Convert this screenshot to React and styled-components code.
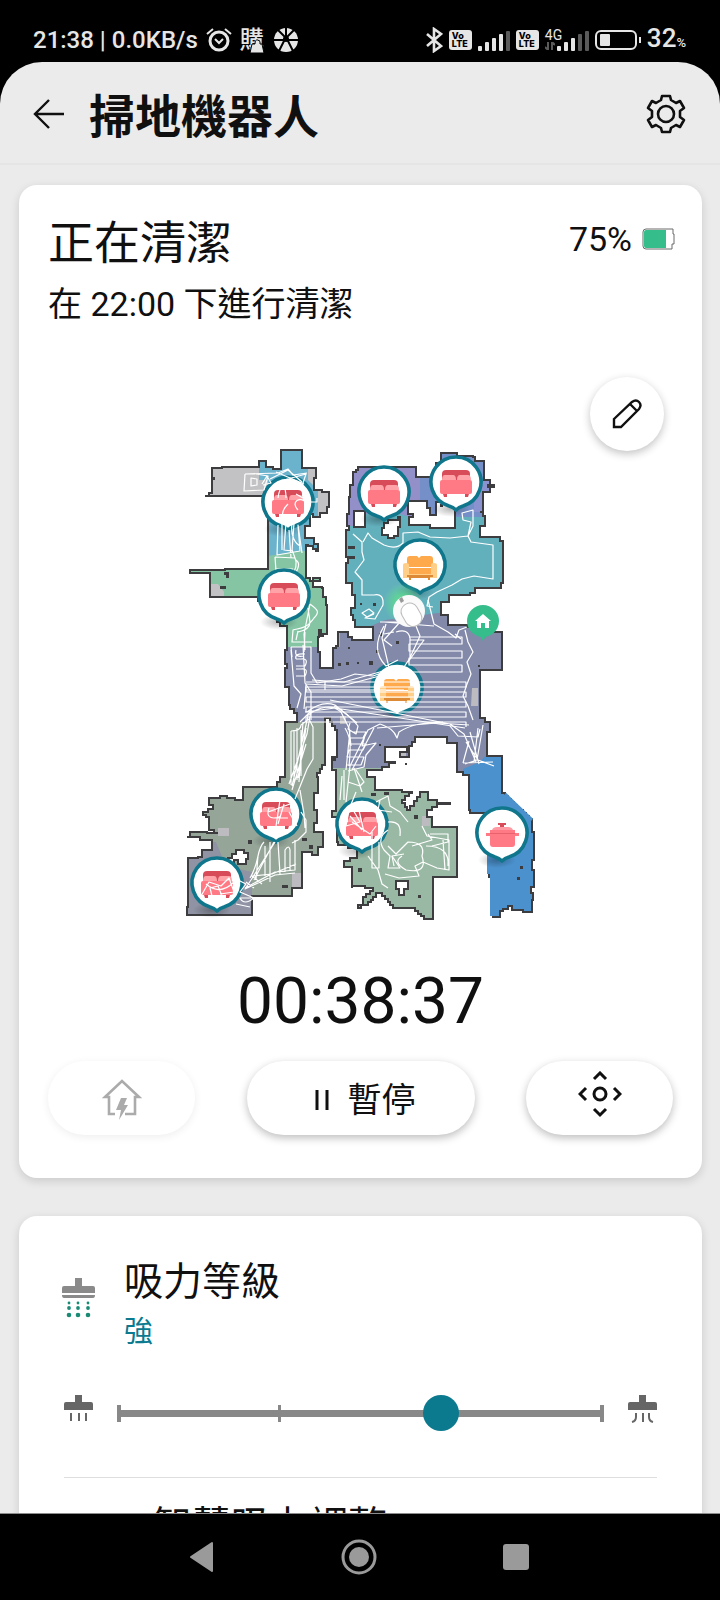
import { useState } from "react";
import styled, { createGlobalStyle } from "styled-components";

const GlobalStyle = createGlobalStyle`
  * {
    box-sizing: border-box;
  }

  body {
    margin: 0;
    background: #000;
    color: #101010;
    font-family: Roboto, "Noto Sans CJK TC", sans-serif;
  }

  button {
    border: 0;
    padding: 0;
    background: none;
    color: inherit;
    font: inherit;
    cursor: pointer;
  }

  h1, h2, p {
    margin: 0;
    font-weight: 400;
  }

  svg {
    display: block;
    flex-shrink: 0;
  }
`;

const Screen = styled.div`
  display: flex;
  flex-direction: column;
  height: 100vh;
`;

/* status bar */

const StatusBar = styled.div`
  display: flex;
  align-items: center;
  justify-content: space-between;
  height: 62px;
  padding: 18px 34px 0 33px;
  color: #e6e6e6;
  font-size: 24px;
  font-weight: 500;
  line-height: 28px;
`;

const StatusGroup = styled.div`
  display: flex;
  align-items: center;
  gap: ${(props) => props.$gap}px;
`;

const ShopBadge = styled.span`
  position: relative;
  font-size: 24px;
  line-height: 28px;

  svg {
    position: absolute;
    right: 0;
    bottom: 1px;
  }
`;

const VoLte = styled.span`
  width: 23px;
  height: 20px;
  padding: 2px 0 0 3px;
  border-radius: 3px;
  background: #e6e6e6;
  color: #000;
  font: 800 9px/8px Inter, sans-serif;
`;

const Percent = styled.span`
  display: flex;
  align-items: baseline;
  font-size: 26px;

  small {
    font-size: 13px;
  }
`;

/* app shell */

const Shell = styled.div`
  flex: 1;
  min-height: 0;
  display: flex;
  flex-direction: column;
  border-radius: 42px 42px 0 0;
  background: #ebebeb;
  overflow: hidden;
`;

const Header = styled.header`
  display: flex;
  align-items: center;
  gap: 24px;
  padding: 16px 34px 13px 33px;
  border-bottom: 2px solid #e5e5e5;

  h1 {
    flex: 1;
    padding-top: 6px;
    font-size: 46px;
    font-weight: 700;
    line-height: 66px;
  }
`;

const Content = styled.main`
  flex: 1;
  min-height: 0;
  display: flex;
  flex-direction: column;
  gap: 38px;
  padding: 20px 18px 0 19px;
  overflow: hidden;
`;

const Card = styled.section`
  flex-shrink: 0;
  border-radius: 18px;
  background: #fff;
  box-shadow: 0 3px 10px rgba(0, 0, 0, 0.14);
`;

const StatusCard = styled(Card)`
  padding: 30px 29px 43px;
`;

const CardTop = styled.div`
  display: flex;
  justify-content: space-between;

  h2 {
    font-size: 46px;
    line-height: 56px;
  }

  p {
    margin-top: 11px;
    font-size: 34px;
    line-height: 44px;
  }
`;

const Battery = styled.div`
  display: flex;
  align-items: center;
  gap: 10px;
  height: 48px;
  margin-right: -2px;
  font-size: 34px;
`;

const MapArea = styled.div`
  position: relative;
  display: flex;
  justify-content: center;
  margin-top: 51px;
  padding: 63px 1px 0 0;
`;

const EditButton = styled.button`
  position: absolute;
  top: 0;
  right: 9px;
  display: grid;
  place-items: center;
  width: 74px;
  height: 74px;
  border-radius: 50%;
  background: #fff;
  box-shadow: 0 3px 8px rgba(0, 0, 0, 0.24);
`;

const Timer = styled.p`
  padding-top: 26px;
  font-size: 64px;
  line-height: 72px;
  text-align: center;
`;

const Actions = styled.div`
  display: flex;
  justify-content: space-between;
  margin-top: 23px;
`;

const PillButton = styled.button`
  display: flex;
  align-items: center;
  justify-content: center;
  gap: 18px;
  width: ${(props) => (props.$wide ? 228 : 147)}px;
  height: 74px;
  padding: ${(props) => (props.$wide ? "3px 0 0 8px" : "3px 0 0")};
  border-radius: 37px;
  background: #fff;
  font-size: 34px;
  line-height: 44px;
  box-shadow: 0 3px 8px rgba(0, 0, 0, 0.26);

  &:disabled {
    box-shadow: 0 2px 8px rgba(0, 0, 0, 0.07);
    cursor: default;
  }
`;

/* suction card */

const SuctionCard = styled(Card)`
  padding: 38px 45px 0;
`;

const SettingHead = styled.div`
  display: flex;
  align-items: flex-start;
  gap: 29px;
  margin-left: -2px;

  svg {
    margin-top: 24px;
  }

  label {
    display: block;
    font-size: 39px;
    line-height: 56px;
  }

  output {
    display: block;
    color: #0b7a8f;
    font-size: 29px;
    line-height: 44px;
  }
`;

const SliderRow = styled.div`
  display: flex;
  align-items: center;
  gap: 8px;
  margin-top: 41px;
  padding-bottom: 46px;
  border-bottom: 1px solid #dedede;
`;

const Slider = styled.input`
  flex: 1;
  min-width: 0;
  height: 36px;
  margin: 0;
  appearance: none;
  background-color: transparent;
  background-image: linear-gradient(#888, #888), linear-gradient(#888, #888),
    linear-gradient(#888, #888), linear-gradient(#888, #888);
  background-position: center, 16px center,
    calc(17px + (100% - 36px) / 3) center, calc(100% - 16px) center;
  background-size: calc(100% - 32px) 7px, 4px 17px, 3px 17px, 4px 17px;
  background-repeat: no-repeat;

  &::-webkit-slider-thumb {
    appearance: none;
    width: 36px;
    height: 36px;
    border-radius: 50%;
    background: #0b7a8f;
  }
`;

const NextSetting = styled.h2`
  padding: 20px 0 40px 89px;
  font-size: 39px;
  line-height: 56px;
`;

/* android navigation */

const NavBar = styled.nav`
  display: flex;
  justify-content: center;
  height: 87px;
  border-top: 1px solid #8c8c8c;
  padding-right: 2px;
`;

const NavButton = styled.button`
  display: grid;
  place-items: center;
  width: 157px;
`;

/* floor map data, in map units */

const OUTLINE = [
  [205, 496], [209, 493], [212, 490], [212, 468], [222, 467], [259, 467],
  [259, 461], [266, 461], [266, 467], [273, 469], [281, 468], [281, 450],
  [302, 450], [302, 468], [316, 468], [316, 478], [314, 480], [314, 490],
  [322, 490], [322, 492], [329, 492], [329, 507], [327, 507], [327, 513],
  [320, 513], [320, 517], [313, 517], [313, 514], [310, 526], [305, 526],
  [305, 538], [314, 538], [314, 544], [318, 549], [318, 551], [313, 546],
  [308, 545], [306, 549], [306, 578], [310, 581], [320, 578], [313, 580],
  [313, 587], [322, 588], [323, 597], [326, 605], [327, 634], [323, 636],
  [321, 630], [319, 637], [318, 652], [320, 658], [320, 668], [333, 668],
  [333, 648], [338, 643], [338, 632], [348, 632], [348, 637], [352, 640],
  [373, 640], [373, 627], [355, 626], [355, 620], [353, 620], [353, 615],
  [351, 615], [351, 608], [355, 606], [355, 595], [352, 590], [352, 583],
  [346, 580], [346, 563], [348, 557], [346, 530], [349, 526], [347, 520],
  [347, 514], [349, 497], [350, 485], [353, 484], [353, 472], [358, 467],
  [416, 467], [416, 477], [430, 477], [436, 470], [436, 463], [441, 463],
  [441, 453], [457, 453], [457, 456], [473, 457], [475, 461], [484, 461],
  [484, 480], [490, 480], [490, 485], [494, 485], [494, 487], [490, 487],
  [490, 492], [483, 492], [483, 512], [480, 512], [485, 520], [485, 526],
  [480, 528], [480, 537], [498, 537], [500, 541], [503, 541], [503, 583],
  [501, 583], [501, 588], [475, 589], [475, 593], [470, 595], [450, 595],
  [449, 602], [441, 603], [441, 615], [448, 617], [448, 625], [467, 627],
  [477, 632], [502, 632], [502, 670], [480, 672], [480, 718], [490, 725],
  [490, 732], [487, 740], [487, 756], [502, 756], [502, 793], [532, 822],
  [532, 832], [534, 860], [532, 870], [534, 887], [531, 893], [533, 900],
  [532, 912], [523, 912], [523, 910], [512, 910], [512, 906], [503, 911],
  [500, 917], [493, 917], [493, 877], [489, 873], [489, 813], [470, 810],
  [469, 775], [457, 769], [457, 743], [447, 743], [447, 737], [417, 737],
  [412, 746], [409, 757], [400, 756], [400, 752], [407, 752], [407, 747],
  [385, 747], [385, 762], [395, 763], [382, 770], [367, 772], [367, 777],
  [375, 779], [375, 790], [402, 792], [412, 793], [402, 803], [407, 810],
  [420, 792], [424, 792], [428, 800], [437, 803], [450, 804], [437, 807],
  [427, 812], [427, 817], [432, 820], [432, 827], [457, 827], [457, 877],
  [433, 877], [433, 919], [427, 919], [415, 908], [393, 905], [382, 893],
  [376, 897], [368, 905], [358, 908], [363, 902], [363, 897], [373, 888],
  [365, 886], [352, 888], [352, 867], [344, 867], [344, 861], [350, 858],
  [357, 858], [357, 848], [338, 842], [337, 817], [332, 815], [332, 811],
  [336, 808], [336, 770], [332, 765], [332, 757], [337, 757], [337, 730],
  [332, 722], [330, 718], [325, 720], [325, 765], [317, 777], [318, 793],
  [314, 810], [317, 823], [314, 832], [323, 832], [323, 847], [318, 850],
  [318, 855], [312, 852], [305, 852], [302, 857], [302, 888], [292, 888],
  [292, 896], [252, 897], [252, 915], [190, 915], [187, 907], [188, 858],
  [198, 857], [202, 850], [212, 850], [212, 840], [200, 837], [187, 837],
  [190, 832], [207, 833], [218, 833], [209, 827], [209, 817], [203, 812],
  [213, 805], [209, 798], [220, 796], [227, 798], [235, 800], [243, 797],
  [243, 787], [273, 787], [280, 777], [285, 773], [285, 722], [297, 722],
  [297, 713], [290, 705], [289, 687], [285, 680], [285, 668], [287, 664],
  [285, 650], [287, 647], [287, 626], [280, 622], [258, 597], [210, 597],
  [210, 573], [190, 571], [190, 570], [225, 569], [268, 569], [268, 496],
];

const ROOMS = [
  { color: "#8289a9", points: "278,600 520,600 520,780 278,780" },
  { color: "#c2c2c4", points: "180,440 340,440 340,580 180,580" },
  { color: "#6bb2cc", points: "259,440 308,440 308,480 318,490 318,556 268,556 268,480 259,480" },
  { color: "#85c5a4", points: "180,552 268,556 300,551 340,551 340,647 280,647 180,600" },
  { color: "#c2c2c4", points: "208,584 218,584 224,592 224,600 208,600" },
  { color: "#938fc8", points: "345,445 424,445 424,530 345,530" },
  { color: "#7590c8", points: "420,445 500,445 500,530 420,530" },
  { color: "#8a92cf", points: "474,480 500,480 500,512 474,512" },
  { color: "#63b0bd", points: "340,526 366,526 366,514 400,514 440,526 456,517 510,517 510,605 438,613 385,620 356,632 340,632" },
  { color: "#95a699", points: "180,722 326,722 326,925 180,925" },
  { color: "#8f93a3", points: "180,842 216,842 226,866 252,872 252,925 180,925" },
  { color: "#9ab9a4", points: "327,768 395,768 462,790 462,925 327,925" },
  { color: "#4b91cd", points: "463,769 480,762 487,754 540,754 540,925 463,925" },
];

const HOLES = [
  "M354 511h11v16h-11z",
  "M382 528h2v-5h4v-3h10v-3h2v10h-2v9h-4v2h-6v-3h-6z",
  "M408 501h19v7h3v7h6v-13h19v26h-25v-3h-21v-8h4v-3h-5z",
  "M228 858h4v-4h4v-4h8v3h4v6h-2v5h-8v-4h-4v3h-6z",
  "M396 881h12v8h-4v6h-5v-6h-3z",
];

const OBSTACLES = [
  [212, 477, 3], [224, 572, 5], [226, 575, 3], [220, 586, 6], [348, 546, 7],
  [348, 556, 7], [360, 603, 2], [373, 603, 3], [348, 647, 2], [379, 633, 3],
  [396, 641, 3], [338, 663, 3], [346, 662, 3], [357, 662, 2], [369, 661, 4],
  [390, 662, 3], [478, 665, 2], [248, 840, 4], [358, 868, 4], [414, 815, 4],
  [418, 895, 3], [517, 877, 3], [520, 866, 3], [302, 838, 5], [309, 845, 4],
  [282, 885, 6], [331, 758, 5], [405, 763, 2], [379, 744, 2], [487, 484, 4],
  [440, 504, 3], [371, 793, 5], [384, 792, 5], [376, 650, 3],
];

// each trail is one polyline of the robot's route
const TRAILS = [
  "M245 474l-1 17 20-1 4-14-12-2M251 478l6 1v6l-6 1zM262 484l5-8 4 7-8 2M245 474l33-1 10-4 5 6 14-2M270 479l18-9 14 12M276 472l28 12M284 480l22-6-4 12",
  "M278 498c2-14 8-14 8 0M288 504c-6 6-8 12-2 18M296 494l14 8h7v-4M298 510c-8-8 2-14 8-8M282 524v26M286 522l-2 28 8 1 2-28M278 525l-1 30 23-4-2-26 4 28M292 524c-2 12 4 20 8 22M289 530l2 28",
  "M275 557l1 14M275 557l20 1M292 550c4 10 6 14 2 22M296 560c6 4 0 12-3 18M275 569h18M310 604c8 6 10 8 4 14-8 12-16 10-21 12l-1 12h20M298 632c10-2 12-6 12-10l-2-14M296 640l2-9M305 632l-1 20M310 604l-6 30 1 16",
  "M291 647h20v26l6 10 24-4 14-5 18 2 22-8M291 647l1 10M296 650q-2 8 8 6M296 659q-2-6 9-5M296 666h9q4-8-4-7h-5M296 676h9q4-8-4-7h-5M303 645l2 38 6 9v28M291 650l3 36 7 8-4 14",
  "M312 680l32 2 50-14M325 681v9M306 684l36 2 60-16M306 690h98M306 685l-2 24M307 712c10-8 20-10 28-7l22 18M307 716c12-10 26-12 34-4l8 16 2 18M305 712l30-4 130 20",
  "M334 706c12 6 18 12 24 20l-2 8-8-5 2-6M350 730l-4 40M345 728c6 10 6 18 4 38M352 732h14l-3 6h-13l-1 6h17l-3 6h-14l-2 7h17l-3 8h-14M366 732l-4 14 14-3-10 12-2 12-16 4M350 766l18-36 12-6M352 770l22-42",
  "M380 724c10 4 14 6 17 14l2-6c12-8 28-10 44-10M377 728l60-5 32 2M330 700l120 24 14 10 12 28M450 726l8 10 20 1 2-8M463 763l30-1M463 763l6-22M465 764l12-4 6-35M478 728l-4 34M466 742l12 18 16 6M470 732l9 32",
  "M465 630l3 12 5 10-6 10 4 12-4 10-4 12 5 10 5 14M428 600l6 24 14 8 8 6 3-8 8-3M455 634l6 5M353 534l9 8v10l2 8-9 12 7 8v15h12q10-2 9 10l-8 14-10-1 9-4M362 613l7-4 5 4-7 4z",
  "M363 542l5-9 4 5 12 7q12 5 19-2v-10l15-1 12 5 20 1 18-2 5-10v-16l-11 3 1 7 8 2-3 14 3 6 22 3v34l-19-3-12 3-10 6-15 7-8 5-2 9 6 1",
  "M380 622h20l-16 18 8 6M384 634l10-2M386 624l-4 14 8 34M396 632q12-4 14 6v20l-8 12M416 626l4 10-12 26M410 640h14l-16 22M384 626q-14 24 2 40l12-6M384 622l50 4",
  "M291 731v54M294 730v52M297 728v52M301 730v46M303 722l-4 60M306 728l-8 50M291 731q10 0 10-6l8-6 4 8v32l-6 10-12 30M311 710l-4 24-18 50M300 722l10-10M308 716l-16 70M306 744l-14 46",
  "M269 808c-4 10 4 12 12 8M268 812l22-8M284 804l-6 20M280 800l-4 26M289 812l8 14M272 818h16M301 812l5 8v12l-8 8-6 3M300 790l4 24 1 14",
  "M274 842l-20 38M264 842c-8 8-4 20-14 36M265 846v30M270 842v40M258 856l-2 24M278 842l2 32M285 872v-22q4-6 5 0v20M295 840v30l-20 2-30 16M296 864l-24 10-20 2 10 8M275 842l-24 38-6 9 30-14 20-2M246 882l8 6",
  "M201 896l8-14 12 4 8-8 5 14-14 2M212 896l-2-8 8-2 4 10M206 884q14 12 28-2M234 878l12 6-6 8 14 6q-10 8-14 0h16M236 904l14 3",
  "M344 770v30M350 766l-4 36M354 768l8 24M348 782l12 4 4-4-8-12M342 776l-2 24M356 792l-12 30M346 812l20-6M350 816l12 14M358 806l6 26M350 806l-4 20 14-4-8-14M352 822l18 12 6-8",
  "M376 802l12-6 2 10 10 6 8 10M380 800l-2 10 14 2M372 832v36h7v-26M368 856l10 14 4 14 6 4M388 830q-12 8-4 20l6 6-2 12h12l-8-12M388 822q14-2 12 14",
  "M402 856q-10 6 4 14 22 4 16-14 4-14-14-14l-12 12-8-8M422 826l5 10 22 4v30l-12-2-14-6-8 4 4 10-20 2-14-4M443 840l2 30M430 834h18v8l-16 4M412 846l20-6-4-6M394 866l-2-10 12-2M426 846q24 0 22 20",
];

const PINS = [
  { x: 288, y: 502, kind: "bed" },
  { x: 384, y: 492, kind: "bed" },
  { x: 456, y: 482, kind: "bed" },
  { x: 284, y: 595, kind: "bed", above: true },
  { x: 420, y: 565, kind: "sofa", above: true },
  { x: 397, y: 688, kind: "sofa" },
  { x: 276, y: 814, kind: "bed" },
  { x: 217, y: 883, kind: "bed" },
  { x: 362, y: 824, kind: "bed" },
  { x: 502, y: 833, kind: "pot" },
];

// turn sloped walls into small right-angled steps
const stepPath = (points) => {
  let d = `M${points[0]}`;
  for (let i = 1; i < points.length; i++) {
    const [x0, y0] = points[i - 1];
    const [x1, y1] = points[i];
    const dx = x1 - x0;
    const dy = y1 - y0;
    const size = Math.min(Math.abs(dx), Math.abs(dy));
    const steps = Math.max(1, Math.round(size / 3));
    for (let s = 1; s <= steps; s++) {
      d += `H${x0 + Math.round((dx * s) / steps)}V${y0 + Math.round((dy * s) / steps)}`;
    }
  }
  return `${d}Z`;
};

// back and forth lanes of a finished area
const lanes = (left, right, top, bottom, gap) => {
  let d = `M${left} ${top}`;
  let atLeft = true;
  for (let y = top; y <= bottom; y += gap) {
    d += atLeft ? `H${right}v${gap}` : `H${left}v${gap}`;
    atLeft = !atLeft;
  }
  return d;
};

const walls = stepPath(OUTLINE);

const BedGlyph = () => (
  <g>
    <path d="M-14-1v-7q0-4 4-4h20q4 0 4 4v7z" fill="#d84c5a" />
    <rect x="-16" y="-2" width="32" height="14" rx="2" fill="#ff7a85" />
    <path d="M-14-2q0-5 3-5h8q3 0 3 5zM1-2q0-5 3-5h8q3 0 3 5z" fill="#ffa3a9" />
    <path d="M-13 12h4v3h-3zM9 12h4l-1 3h-3z" fill="#d84c5a" />
  </g>
);

const SofaGlyph = () => (
  <g>
    <path d="M-13 2v-8q0-3 3-3h7l2 2 2-2h9q3 0 3 3v8z" fill="#ffa94d" />
    <path d="M-17 0q0-2 3-2t3 2v3h22V0q0-2 3-2t3 2v13h-34z" fill="#ffcf88" />
    <path d="M-11 3h22v6h-22z" fill="#ffa94d" />
    <path d="M-13 10h26v2h-3v3h-2v-2H-9v2h-2v-3h-2z" fill="#dc8a35" />
  </g>
);

const PotGlyph = () => (
  <g>
    <path d="M-4-10h8v2h-2v2h-4v-2h-2z" fill="#d84c5a" />
    <path d="M-10-3q1-3 5-3H6q4 0 5 3z" fill="#ff9aa2" />
    <path d="M-12-3h25v14q0 3-3 3H-9q-3 0-3-3z" fill="#ff7a85" />
    <path d="M-16 0h33v3h-33z" fill="#ff7a85" />
    <path d="M-12 0h25v1h-25z" fill="#e8616d" />
  </g>
);

const GLYPHS = { bed: BedGlyph, sofa: SofaGlyph, pot: PotGlyph };

const Pin = ({ x, y, kind }) => {
  const Glyph = GLYPHS[kind];
  return (
    <g transform={`translate(${x} ${y})`}>
      <ellipse cx="-5" cy="27" rx="19" ry="8" fill="url(#pinShadow)" />
      <path
        d="M-7 24A25 25 0 1 1 7 24Q3 25 0 28Q-3 25-7 24Z"
        fill="#fff"
        stroke="#0f768b"
        strokeWidth="3.6"
        strokeLinejoin="round"
      />
      <Glyph />
    </g>
  );
};

const FloorMap = () => (
  <svg width="360" height="500" viewBox="180 440 360 500" role="img" aria-label="清潔地圖">
    <defs>
      <clipPath id="floor">
        <path d={walls} />
      </clipPath>
      <radialGradient id="pinShadow">
        <stop offset="0" stopColor="#000" stopOpacity="0.28" />
        <stop offset="1" stopColor="#000" stopOpacity="0" />
      </radialGradient>
      <radialGradient id="glow">
        <stop offset="0.4" stopColor="#5fe08a" stopOpacity="0.7" />
        <stop offset="1" stopColor="#5fe08a" stopOpacity="0" />
      </radialGradient>
    </defs>

    <g clipPath="url(#floor)">
      {ROOMS.map((room) => (
        <polygon key={room.points} points={room.points} fill={room.color} />
      ))}
      <path d="M472 688h6v18h-7zM400 748h6v8h-6zM340 716h6v8h-6zM218 828h11v8h-11zM292 873h11v14h-11zM437 803h12v5h-12zM422 816h8v10h-8z" fill="#bcbcc0" />
    </g>
    <path d={walls} fill="none" stroke="#3d3d40" strokeWidth="2" />
    <path d="M504 795L531 821" stroke="#4b91cd" strokeWidth="6" />
    <path d="M489 815v57h3v44" stroke="#4b91cd" strokeWidth="4" fill="none" />
    {HOLES.map((d) => (
      <path key={d} d={d} fill="#fff" stroke="#3d3d40" strokeWidth="2" />
    ))}
    {OBSTACLES.map(([x, y, size]) => (
      <rect key={`${x}-${y}`} x={x} y={y} width={size} height={size > 4 ? 3 : size} fill="#3d3d40" />
    ))}

    {PINS.filter((pin) => !pin.above).map((pin) => (
      <Pin key={`${pin.x}-${pin.y}`} {...pin} />
    ))}

    <g fill="none" stroke="#fff" strokeWidth="1.2" strokeLinejoin="round">
      <path d={lanes(409, 462, 637, 674, 7)} />
      <path d={lanes(306, 466, 682, 722, 5)} />
      {TRAILS.map((d) => (
        <path key={d} d={d} />
      ))}
    </g>

    {PINS.filter((pin) => pin.above).map((pin) => (
      <Pin key={`${pin.x}-${pin.y}`} {...pin} />
    ))}

    <circle cx="403" cy="603" r="20" fill="url(#glow)" />
    <circle cx="409" cy="611" r="16" fill="#fafafa" />
    <path d="M399 599l3-2 2 4-3 2z" fill="#999" />
    <rect x="403" y="603" width="17" height="24" rx="8" fill="#fff" stroke="#bbb" transform="rotate(-30 411 615)" />

    <path d="M478 633h10l-5 8z" fill="#35bd8c" />
    <circle cx="483" cy="621" r="16" fill="#35bd8c" />
    <path d="M483 614l8 7h-2v7h-4v-5h-4v5h-4v-7h-2z" fill="#fff" />
  </svg>
);

/* icons */

const AlarmIcon = () => (
  <svg width="26" height="26" viewBox="0 0 26 26" fill="none" stroke="#e6e6e6" strokeWidth="3">
    <circle cx="13" cy="14" r="9" />
    <path d="M9 12l4 4 4-4" strokeWidth="2" />
    <path d="M1 7l6-5M25 7l-6-5" strokeWidth="2" />
  </svg>
);

const BagIcon = () => (
  <svg width="14" height="14" viewBox="0 0 14 14">
    <path d="M0 14l2-9h3q0-5 3-4t2 4h2l2 9z" fill="#e6e6e6" stroke="#000" />
  </svg>
);

const ShutterIcon = () => (
  <svg width="24" height="24" viewBox="0 0 24 24">
    <circle cx="12" cy="12" r="12" fill="#e6e6e6" />
    <path d="M12 0v11M0 12h24M12 9L5 23M12 9l7 14M12 10L4 2M12 10l8-8" stroke="#000" strokeWidth="2" />
    <circle cx="12" cy="11" r="3" fill="#000" />
  </svg>
);

const BluetoothIcon = () => (
  <svg width="17" height="26" viewBox="0 0 17 26" fill="none" stroke="#e6e6e6" strokeWidth="2.6">
    <path d="M1 7l14 12-7 5V2l7 5L1 19" />
  </svg>
);

const Signal = ({ active }) => (
  <svg width="32" height="21" viewBox="0 0 32 21">
    {[5, 9, 13, 17, 20].map((h, i) => (
      <rect key={h} x={i * 7} y={21 - h} width="4" height={h} rx="1" fill={i < active ? "#e6e6e6" : "#5a5a5a"} />
    ))}
  </svg>
);

const MobileData = styled.span`
  display: flex;
  flex-direction: column;
  align-items: flex-start;
  width: 12px;
  height: 24px;
  margin-right: -6px;
  font-size: 14px;
  font-weight: 400;
  line-height: 14px;
`;

const DataArrows = () => (
  <svg width="10" height="8" viewBox="0 0 10 8" stroke="#5a5a5a" strokeWidth="2" fill="none">
    <path d="M3 0v8L0 5M7 8V0l3 3" />
  </svg>
);

const PhoneBattery = () => (
  <svg width="46" height="20" viewBox="0 0 46 20">
    <rect x="1" y="1" width="40" height="18" rx="5" fill="none" stroke="#e6e6e6" strokeWidth="2" />
    <rect x="5" y="4" width="10" height="12" rx="1" fill="#e6e6e6" />
    <rect x="44" y="7" width="2" height="6" fill="#e6e6e6" />
  </svg>
);

const BackIcon = () => (
  <svg width="32" height="30" viewBox="0 0 32 30" fill="none" stroke="#101010" strokeWidth="2.4">
    <path d="M31 15H2M16 1L2 15l14 14" />
  </svg>
);

const GearIcon = () => (
  <svg width="40" height="40" viewBox="-20 -20 40 40" fill="none" stroke="#101010" strokeWidth="2.6" strokeLinejoin="round">
    <path d="M-4-18H4L5-14 10-11 14-13 18-6 14-3V3L18 6 14 13 10 11 5 14 4 18H-4L-5 14-10 11-14 13-18 6-14 3V-3L-18-6-14-13-10-11-5-14Z" />
    <circle r="8" />
  </svg>
);

const RobotBattery = () => (
  <svg width="33" height="22" viewBox="0 0 33 22">
    <path d="M4 1h27v5h1v10h-2v5H4q-3 0-3-3V4q0-3 3-3z" fill="#fff" stroke="#6a6a6a" />
    <path d="M4 2h20v18H4q-2 0-2-2V4q0-2 2-2z" fill="#35bd8c" />
  </svg>
);

const PencilIcon = () => (
  <svg width="30" height="30" viewBox="0 0 30 30" fill="none" stroke="#101010" strokeWidth="2.4">
    <path d="M2 20L20 3q4-3 7 0t0 7L9 28H2zM18 5l7 7" />
  </svg>
);

const HomeChargeIcon = () => (
  <svg width="40" height="42" viewBox="0 0 40 42" fill="none" stroke="#ababab" strokeWidth="2.6">
    <path d="M13 35H7V18H3L20 2l17 16h-4v17H23" />
    <path d="M19 19h6l-3 7h4l-9 15 2-10h-5z" fill="#ababab" stroke="none" />
  </svg>
);

const PauseIcon = () => (
  <svg width="16" height="22" viewBox="0 0 16 22" fill="none" stroke="#101010" strokeWidth="3">
    <path d="M3 1v20M13 1v20" />
  </svg>
);

const RemoteIcon = () => (
  <svg width="44" height="58" viewBox="0 0 44 58" fill="none" stroke="#101010" strokeWidth="3">
    <circle cx="22" cy="23" r="6" />
    <path d="M16 8l6-6 6 6M16 38l6 6 6-6M8 17l-6 6 6 6M36 17l6 6-6 6" />
  </svg>
);

const SuctionIcon = () => (
  <svg width="33" height="40" viewBox="0 0 33 40">
    <path d="M13 0h7v8h11q2 0 2 2v5H0v-5q0-2 2-2h11zM0 17h33q0 3-2 3H2q-2 0-2-3z" fill="#8a8a8a" />
    {[7, 16, 26].map((x) => (
      <g key={x} fill="#1a8a74">
        <circle cx={x} cy="25" r="1.4" />
        <circle cx={x} cy="30" r="1.9" />
        <circle cx={x} cy="37" r="2.3" />
      </g>
    ))}
  </svg>
);

const NozzleIcon = ({ strong }) => (
  <svg width="29" height="36" viewBox="0 0 29 36">
    <path d="M11 0h7v7h9q2 0 2 2v6H0V9q0-2 2-2h9z" fill="#666" />
    <path
      d={strong ? "M8 18v4q0 4-4 5M15 18v9M21 18v4q0 4 4 5" : "M7 18v8M15 18v8M22 18v8"}
      fill="none"
      stroke="#666"
      strokeWidth="2"
    />
  </svg>
);

const LEVELS = ["靜音", "標準", "強", "超強"];

const App = () => {
  const [level, setLevel] = useState(2);

  return (
    <Screen>
      <GlobalStyle />
      <StatusBar>
        <StatusGroup $gap={8}>
          <span>21:38 | 0.0KB/s</span>
          <AlarmIcon />
          <StatusGroup $gap={10}>
            <ShopBadge>
              購
              <BagIcon />
            </ShopBadge>
            <ShutterIcon />
          </StatusGroup>
        </StatusGroup>
        <StatusGroup $gap={6}>
          <BluetoothIcon />
          <VoLte>Vo<br />LTE</VoLte>
          <Signal active={4} />
          <VoLte>Vo<br />LTE</VoLte>
          <MobileData>
            4G
            <DataArrows />
          </MobileData>
          <Signal active={3} />
          <PhoneBattery />
          <Percent>32<small>%</small></Percent>
        </StatusGroup>
      </StatusBar>

      <Shell>
        <Header>
          <button aria-label="返回"><BackIcon /></button>
          <h1>掃地機器人</h1>
          <button aria-label="設定"><GearIcon /></button>
        </Header>

        <Content>
          <StatusCard>
            <CardTop>
              <div>
                <h2>正在清潔</h2>
                <p>在 22:00 下進行清潔</p>
              </div>
              <Battery>
                75%
                <RobotBattery />
              </Battery>
            </CardTop>

            <MapArea>
              <FloorMap />
              <EditButton aria-label="編輯地圖"><PencilIcon /></EditButton>
            </MapArea>

            <Timer>00:38:37</Timer>

            <Actions>
              <PillButton disabled aria-label="返回充電座"><HomeChargeIcon /></PillButton>
              <PillButton $wide>
                <PauseIcon />
                暫停
              </PillButton>
              <PillButton aria-label="遙控"><RemoteIcon /></PillButton>
            </Actions>
          </StatusCard>

          <SuctionCard>
            <SettingHead>
              <SuctionIcon />
              <div>
                <label htmlFor="suction">吸力等級</label>
                <output htmlFor="suction">{LEVELS[level]}</output>
              </div>
            </SettingHead>
            <SliderRow>
              <NozzleIcon />
              <Slider
                id="suction"
                type="range"
                min="0"
                max="3"
                value={level}
                onChange={(e) => setLevel(Number(e.target.value))}
              />
              <NozzleIcon strong />
            </SliderRow>
            <NextSetting>智慧吸力調整</NextSetting>
          </SuctionCard>
        </Content>
      </Shell>

      <NavBar>
        <NavButton aria-label="上一頁">
          <svg width="26" height="32" viewBox="0 0 26 32">
            <path d="M23 2v28L2 16z" fill="#9a9a9a" stroke="#9a9a9a" strokeWidth="2" strokeLinejoin="round" />
          </svg>
        </NavButton>
        <NavButton aria-label="主畫面">
          <svg width="36" height="36" viewBox="0 0 36 36">
            <circle cx="18" cy="18" r="16" fill="none" stroke="#9a9a9a" strokeWidth="3" />
            <circle cx="18" cy="18" r="10" fill="#9a9a9a" />
          </svg>
        </NavButton>
        <NavButton aria-label="最近使用">
          <svg width="26" height="26" viewBox="0 0 26 26">
            <rect width="26" height="26" rx="3" fill="#9a9a9a" />
          </svg>
        </NavButton>
      </NavBar>
    </Screen>
  );
};

export default App;
